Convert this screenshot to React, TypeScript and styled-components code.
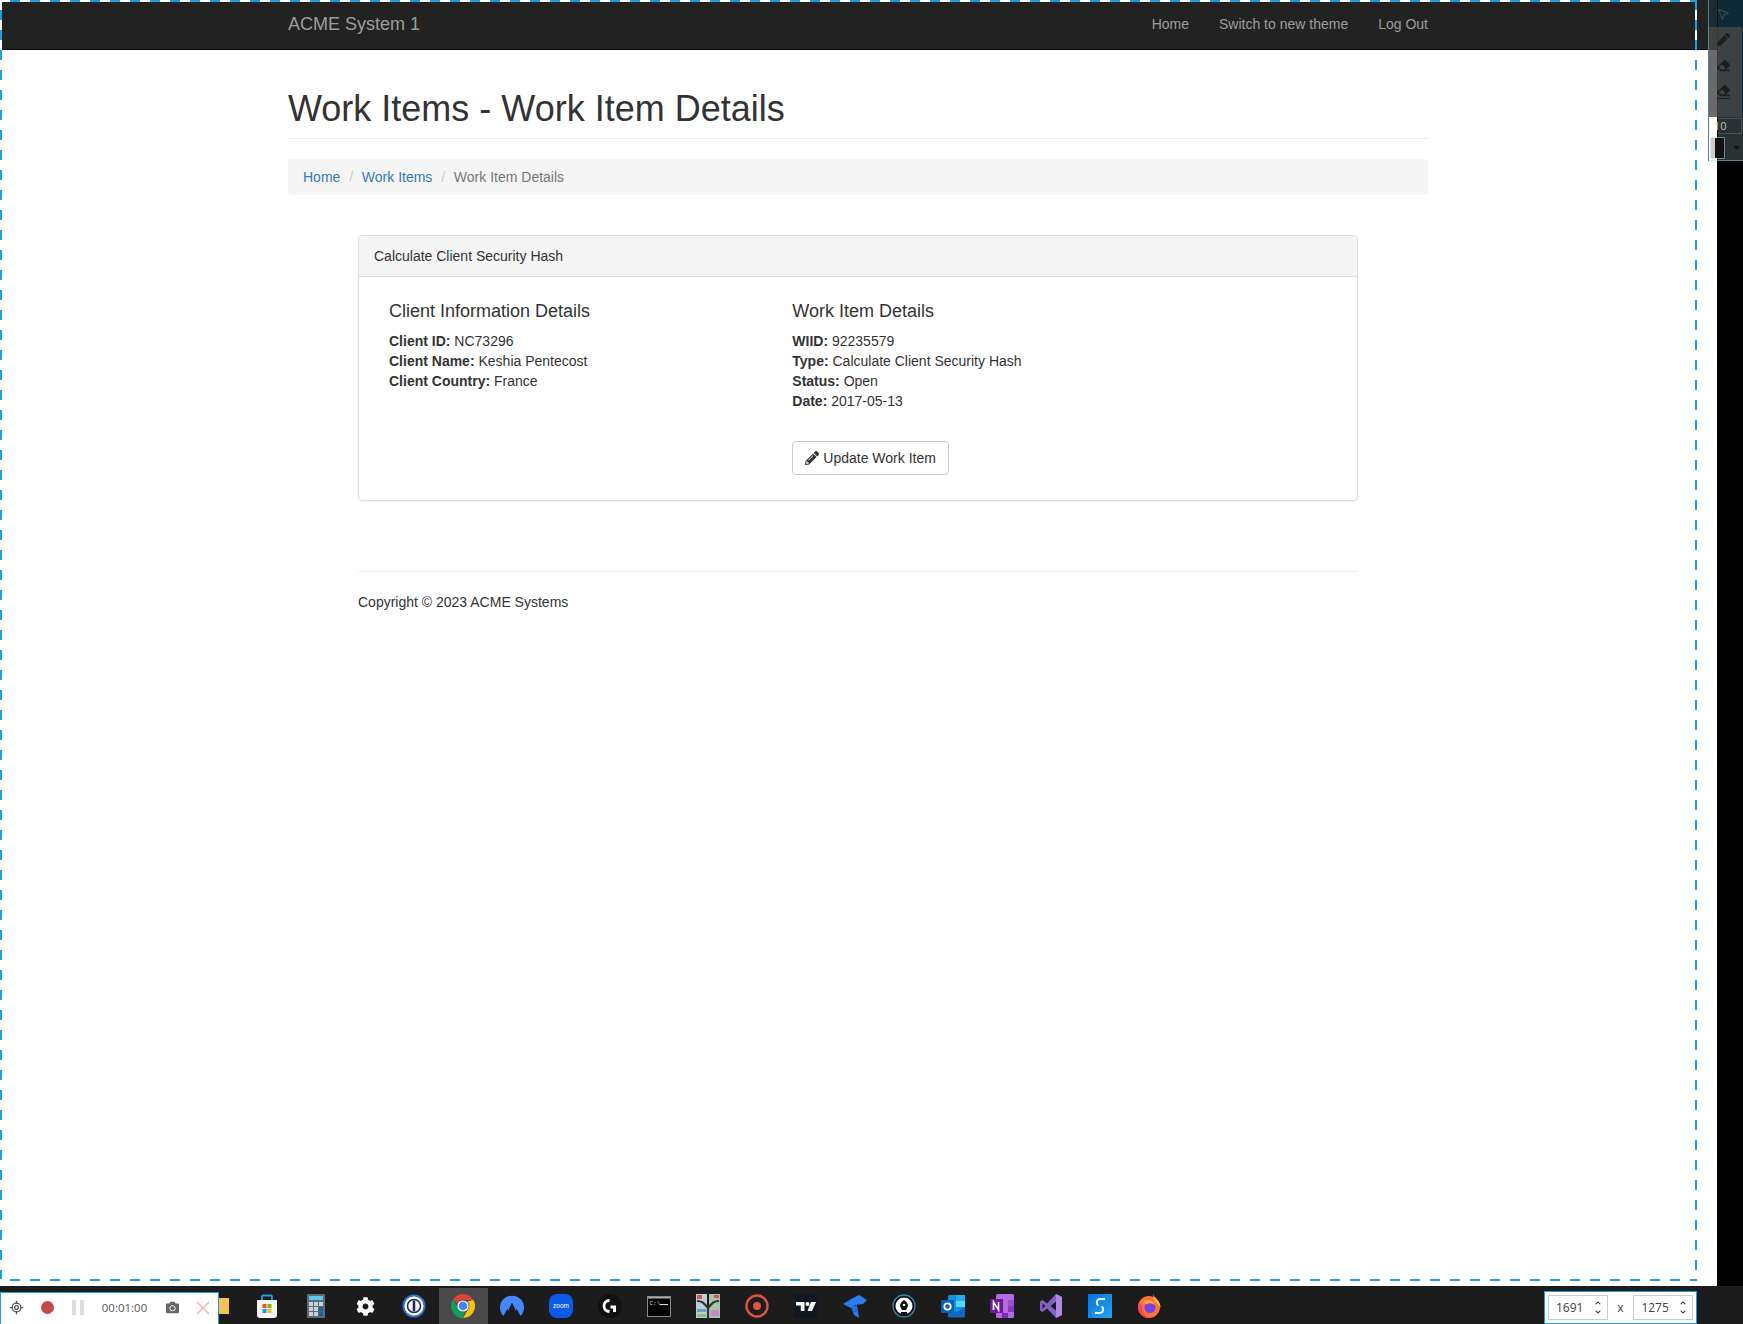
import React from 'react';
import styled, { createGlobalStyle } from 'styled-components';
import { FaPencilAlt, FaCog, FaPen, FaEraser, FaCamera, FaChevronUp, FaChevronDown, FaCaretDown } from 'react-icons/fa';
import { LuLocateFixed, LuMousePointer2 } from 'react-icons/lu';

const GlobalStyle = createGlobalStyle`
    html, body {
        margin: 0;
        padding: 0;
        background: #000;
    }
    body {
        font-family: "Liberation Sans", Arial, sans-serif;
        font-size: 14px;
        line-height: 20px;
        color: #333;
    }
    * {
        box-sizing: border-box;
    }
`;

const Screen = styled.div`
    position: relative;
    width: 1743px;
    height: 1324px;
    overflow: hidden;
    background: #000;
    display: flex;
    flex-direction: column;
`;

const Desk = styled.div`
    flex: 1;
    width: 1717px;
    background: #fff;
`;

const Navbar = styled.nav`
    height: 50px;
    background: #222;
    border-bottom: 1px solid #080808;
`;

const Container = styled.div`
    width: 1140px;
    margin-left: 288px;
`;

const NavInner = styled(Container)`
    height: 49px;
    padding-bottom: 2px;
    display: flex;
    align-items: center;
    justify-content: space-between;
`;

const Brand = styled.a`
    font-size: 18px;
    color: #9d9d9d;
`;

const NavLinks = styled.div`
    display: flex;
    gap: 30px;
`;

const NavLink = styled.a`
    color: #9d9d9d;
`;

const PageHeader = styled.div`
    margin-top: 39px;
    padding-bottom: 9px;
    border-bottom: 1px solid #eee;
    margin-bottom: 20px;
`;

const Title = styled.h1`
    margin: 0;
    font-size: 36px;
    font-weight: 500;
    line-height: 39.6px;
    color: #333;
`;

const Breadcrumb = styled.div`
    display: flex;
    height: 36px;
    align-items: center;
    padding: 0 15px;
    background: #f5f5f5;
    border-radius: 4px;
    margin-bottom: 40px;
`;

const Crumb = styled.a<{ $active?: boolean }>`
    color: ${p => (p.$active ? '#777' : '#337ab7')};
`;

const CrumbSep = styled.span`
    color: #ccc;
    padding: 0 8.8px;
`;

const Inner = styled.div`
    width: 1000px;
    margin-left: 70px;
`;

const Panel = styled.div`
    height: 266px;
    border: 1px solid #ddd;
    border-radius: 4px;
    box-shadow: 0 1px 1px rgba(0, 0, 0, 0.05);
`;

const PanelHeading = styled.div`
    height: 41px;
    padding: 10px 15px;
    background: #f5f5f5;
    border-bottom: 1px solid #ddd;
    border-radius: 3px 3px 0 0;
`;

const PanelBody = styled.div`
    display: grid;
    grid-template-columns: 403.3px 1fr;
    padding: 24px 30px 0;
`;

const SectionTitle = styled.h4`
    margin: 0 0 10px;
    font-size: 18px;
    font-weight: 500;
    line-height: 20px;
    color: #333;
`;

const Line = styled.div`
    height: 20px;
`;

const UpdateButton = styled.button`
    display: flex;
    align-items: center;
    gap: 4px;
    height: 34px;
    margin-top: 30px;
    padding: 0 12px;
    background: #fff;
    border: 1px solid #ccc;
    border-radius: 4px;
    color: #333;
    font: inherit;

    svg {
        width: 14px;
        height: 14px;
    }
`;

const Footer = styled.div`
    margin-top: 70px;
    padding-top: 20px;
    border-top: 1px solid #eee;
`;

const Taskbar = styled.div`
    height: 38px;
    flex: none;
    background: #1c1c1c;
    display: flex;
    padding-left: 193.5px;
    padding-top: 2px;
`;

const Slot = styled.div<{ $active?: boolean }>`
    width: 49.03px;
    height: 36px;
    display: flex;
    align-items: center;
    justify-content: center;
    background: ${p => (p.$active ? '#4a4a4a' : 'transparent')};

    svg {
        width: 24px;
        height: 24px;
        display: block;
    }
`;

const GearIcon = styled(FaCog)`
    && {
        width: 19px;
        height: 19px;
        color: #fff;
    }
`;

const DashEdge = styled.div<{ $side: 'top' | 'bottom' | 'left' | 'right' }>`
    position: absolute;
    ${p => p.$side === 'top' && 'left: 0; top: 0; width: 1697px; height: 2px;'}
    ${p => p.$side === 'bottom' && 'left: 0; top: 1279px; width: 1697px; height: 2px;'}
    ${p => p.$side === 'left' && 'left: 0; top: 0; width: 2px; height: 1281px;'}
    ${p => p.$side === 'right' && 'left: 1695px; top: 0; width: 2px; height: 1281px;'}
    background: repeating-linear-gradient(
        ${p => (p.$side === 'top' || p.$side === 'bottom' ? '90deg' : '180deg')},
        ${p => (p.$side === 'right' ? '#1ba1e2 0 10px, #fff 10px 20px' : '#fff 0 10px, #1ba1e2 10px 20px')}
    );
`;

const Recorder = styled.div`
    position: absolute;
    left: 0;
    top: 1292px;
    width: 219px;
    height: 32px;
    padding-bottom: 2px;
    background: #fff;
    border: 1px solid #1ba1e2;
    border-bottom: none;
    display: flex;
    align-items: center;
    color: #555;
    font-family: "Open Sans", sans-serif;
    font-size: 11.5px;
`;

const RecItem = styled.div<{ $w: number }>`
    width: ${p => p.$w}px;
    display: flex;
    justify-content: center;
    align-items: center;
    flex: none;
`;

const RecordDot = styled.span`
    width: 13px;
    height: 13px;
    border-radius: 50%;
    background: #c44a4a;
`;

const PauseBars = styled.span`
    width: 12px;
    height: 15px;
    border-left: 4px solid #ddd;
    border-right: 4px solid #ddd;
`;

const SizeBox = styled.div`
    position: absolute;
    left: 1544px;
    top: 1291px;
    width: 153px;
    height: 33px;
    background: #fff;
    border: 1px solid #1ba1e2;
    display: flex;
    align-items: center;
    padding: 0 3px;
    color: #444;
    font-family: "Open Sans", sans-serif;
    font-size: 12px;
`;

const SizeField = styled.div`
    width: 60px;
    height: 25px;
    border: 1px solid #ccc;
    display: flex;
    align-items: center;
    justify-content: space-between;
    padding: 0 5px 0 7px;
`;

const SizeX = styled.span`
    width: 26px;
    text-align: center;
`;

const Spinner = styled.span`
    display: flex;
    flex-direction: column;
    gap: 3px;
    color: #333;

    svg {
        width: 8px;
        height: 6px;
        display: block;
    }
`;

const SideTools = styled.div`
    position: absolute;
    left: 1708px;
    top: 0;
    width: 35px;
    height: 161px;
    display: flex;
    flex-direction: column;
    background: linear-gradient(90deg, transparent 9px, #0e2a38 9px);
    border-left: 1px solid rgba(170, 220, 240, 0.5);
    border-bottom: 1px solid rgba(170, 220, 240, 0.5);
`;

const SideTop = styled.div`
    height: 27px;
    padding-right: 6px;
    background: linear-gradient(90deg, rgba(0, 90, 130, 0.18) 9px, transparent 9px);
    display: flex;
    align-items: center;
    justify-content: center;
    color: #324a55;
`;

const SidePanel = styled.div`
    height: 90px;
    width: 33px;
    background: rgba(72, 72, 72, 0.81);
    display: flex;
    flex-direction: column;
    align-items: center;
    padding: 6px 5px 0 0;
    gap: 13px;
    color: #1d1d1d;

    svg {
        display: block;
        width: 13px;
        height: 13px;
    }
`;

const EraserLine = styled.div`
    border-bottom: 1px solid #1d1d1d;
    padding-bottom: 1px;
    margin-top: -1px;
`;

const SideLower = styled.div`
    flex: 1;
    display: flex;
    flex-direction: column;
    padding: 1px 1px 0 0;
    gap: 2px;
    background: linear-gradient(90deg, transparent 9px, rgba(50, 50, 50, 0.8) 9px);
    font-family: "Open Sans", sans-serif;
    font-size: 11px;
    color: #c4c4c4;
`;

const SideSpin = styled.div`
    height: 16px;
    display: flex;
    align-items: center;
    justify-content: space-between;
    padding: 0 4px 0 4px;
    border: 1px solid rgba(170, 220, 240, 0.2);
`;

const SideSwatch = styled.div`
    flex: 1;
    margin-bottom: 1px;
    display: flex;
    align-items: center;
    gap: 8px;
    color: #111;

    svg {
        width: 11px;
        height: 11px;
    }
`;

const SwatchColor = styled.span`
    width: 15px;
    height: 20px;
    margin-left: 2px;
    background: linear-gradient(90deg, #ccc 4px, #111 4px);
    outline: 1px solid rgba(170, 220, 240, 0.5);
`;

const ZoomWord = styled.text`
    font-family: "Liberation Sans", sans-serif;
    font-size: 6.5px;
    fill: #fff;
`;

const TermWord = styled.text`
    font-family: "Liberation Mono", monospace;
    font-size: 6px;
    fill: #ddd;
`;

const StoreIcon = () => (
    <svg viewBox="0 0 24 24">
        <path d="M7 7V2.500a1 1 0 0 1 1-1h8a1 1 0 0 1 1 1V7" fill="none" stroke="#20a4e0" strokeWidth="1.800" />
        <path d="M2 6h20v15a3 3 0 0 1-3 3H5a3 3 0 0 1-3-3z" fill="#f4f4f4" />
        <rect x="7.500" y="10" width="4" height="4" fill="#f25022" />
        <rect x="12.500" y="10" width="4" height="4" fill="#7fba00" />
        <rect x="7.500" y="15" width="4" height="4" fill="#00a4ef" />
        <rect x="12.500" y="15" width="4" height="4" fill="#ffb900" />
    </svg>
);

const CalcIcon = () => (
    <svg viewBox="0 0 24 24">
        <rect x="3" y="0" width="18" height="24" rx="1" fill="#5d6b74" />
        <rect x="5" y="2" width="14" height="4" fill="#5ccbe8" />
        {[8, 13, 18].map(y =>
            [5, 10, 15].map(x => (
                <rect key={`${x}-${y}`} x={x} y={y} width="4" height="4" fill={x === 15 && y > 8 ? '#1d5f9e' : '#c9d1d6'} />
            ))
        )}
    </svg>
);

const OnePasswordIcon = () => (
    <svg viewBox="0 0 24 24">
        <circle cx="12" cy="12" r="11.500" fill="#2f6fd8" />
        <circle cx="12" cy="12" r="9.500" fill="#fff" />
        <circle cx="12" cy="12" r="6.500" fill="#fff" stroke="#1a285f" strokeWidth="1.500" />
        <rect x="10.700" y="6.500" width="2.600" height="11" rx="1.200" fill="#1a285f" />
    </svg>
);

const ChromeIcon = () => (
    <svg viewBox="0 0 24 24">
        <path d="M12 0a12 12 0 0 1 10.400 6H12a6 6 0 0 0-5.600 3.800L2.300 4.900A12 12 0 0 1 12 0z" fill="#db4437" />
        <path d="M22.400 6A12 12 0 0 1 12 24l5.200-9a6 6 0 0 0-1-7.500z" fill="#f4c20d" />
        <path d="M12 24A12 12 0 0 1 2.300 4.900l4.900 9.300a6 6 0 0 0 6.600 3.500z" fill="#0f9d58" />
        <circle cx="12" cy="12" r="5.600" fill="#fff" />
        <circle cx="12" cy="12" r="4.400" fill="#4285f4" />
    </svg>
);

const NordIcon = () => (
    <svg viewBox="0 0 24 24">
        <path d="M3.400 22A12 12 0 1 1 20.600 22L16.600 14.500l-.6 2.400L12 8.500l-4 8.400-.6-2.400z" fill="#4687ff" />
    </svg>
);

const ZoomIcon = () => (
    <svg viewBox="0 0 24 24">
        <rect width="24" height="24" rx="8" fill="#0e5ae8" />
        <ZoomWord x="12" y="14" textAnchor="middle">zoom</ZoomWord>
    </svg>
);

const LogiIcon = () => (
    <svg viewBox="0 0 24 24">
        <circle cx="12" cy="12" r="12" fill="#111" />
        <path d="M11.500 6.500a5.500 5.500 0 0 0 0 11" fill="none" stroke="#fff" strokeWidth="2.800" />
        <path d="M12.500 11.500h5.500v6.500h-3v-3.500h-2.500z" fill="#fff" />
    </svg>
);

const TerminalIcon = () => (
    <svg viewBox="0 0 24 24">
        <rect x="0.500" y="2.500" width="23" height="20" fill="#000" stroke="#8a8a8a" />
        <rect x="1" y="3" width="22" height="1.500" fill="#aaa" />
        <TermWord x="2.500" y="10.500">C:\</TermWord>
        <rect x="13" y="10" width="8" height="1.100" fill="#ddd" />
    </svg>
);

const MosaicIcon = () => (
    <svg viewBox="0 0 24 24">
        <rect width="11" height="24" fill="#b9d0d8" />
        <rect x="13" width="11" height="24" fill="#a9c4ad" />
        <rect x="1" y="1" width="5" height="4" fill="#d05a5a" />
        <rect x="18" y="1" width="5" height="3" fill="#d05a5a" />
        <rect x="1" y="15" width="9" height="3" fill="#6a9fc0" />
        <rect x="15" y="16" width="8" height="6" fill="#c58ac9" />
        <rect x="1" y="20" width="9" height="3" fill="#8fc07a" />
        <path d="M1 7c5 0 7 2 11 7 4-5 6-7 11-7M12 14v10" fill="none" stroke="#333" strokeWidth="2.200" />
    </svg>
);

const RecordRingIcon = () => (
    <svg viewBox="0 0 24 24">
        <circle cx="12" cy="12" r="10.500" fill="none" stroke="#dd5444" strokeWidth="2.400" />
        <circle cx="12" cy="12" r="4" fill="#dd5444" />
    </svg>
);

const TradingViewIcon = () => (
    <svg viewBox="0 0 24 24">
        <rect width="24" height="24" fill="#131722" />
        <path d="M2 8h8.500v9H6.800v-5.500H2zM17 8h5l-4 9h-4.500z" fill="#fff" />
        <circle cx="13.500" cy="10" r="2" fill="#fff" />
    </svg>
);

const FoldsIcon = () => (
    <svg viewBox="0 0 24 24">
        <path d="M0 10l8-5 8-4 8 5-4 4-8 1-4 3z" fill="#2a7df0" />
        <path d="M8 13l6-2 1 6-5 1z" fill="#1f6fe0" />
        <path d="M10 18l5-1 1 7-5-3z" fill="#2a7df0" />
    </svg>
);

const BulbIcon = () => (
    <svg viewBox="0 0 24 24">
        <circle cx="12" cy="12" r="11" fill="#0b0b0b" stroke="#2b8aa5" strokeWidth="1.300" />
        <circle cx="12" cy="12" r="8.500" fill="#fff" />
        <path d="M12 6c3 2 4.500 4 3.500 7l-1.500 3h-4L8.500 13C7.500 10 9 8 12 6z" fill="#0b0b0b" />
        <circle cx="12" cy="11" r="1.300" fill="#fff" />
        <rect x="9" y="18" width="6" height="3" fill="#0b0b0b" />
    </svg>
);

const OutlookIcon = () => (
    <svg viewBox="0 0 24 24">
        <rect x="7" y="1" width="17" height="22" rx="1.500" fill="#1490df" />
        <rect x="15" y="1" width="9" height="6" fill="#28a8ea" />
        <rect x="15" y="7" width="9" height="6" fill="#50d9ff" />
        <path d="M7 13l8.500 5 8.500-5v9a1.500 1.500 0 0 1-1.500 1.500H8.500A1.500 1.500 0 0 1 7 22z" fill="#0f6cbd" />
        <rect y="6" width="13" height="13" rx="1" fill="#0a5fb4" />
        <circle cx="6.500" cy="12.500" r="3.200" fill="none" stroke="#fff" strokeWidth="1.800" />
    </svg>
);

const OneNoteIcon = () => (
    <svg viewBox="0 0 24 24">
        <rect x="6" y="0" width="18" height="24" rx="1.500" fill="#b36be0" />
        <rect x="18" y="6" width="6" height="6" fill="#9a4ed0" />
        <rect x="18" y="12" width="6" height="6" fill="#8a3bbd" />
        <rect x="12" y="19" width="6" height="5" fill="#7a2fb0" />
        <rect y="5" width="13" height="14" rx="1" fill="#6a1b9a" />
        <path d="M3.500 16V8l5 8V8" fill="none" stroke="#fff" strokeWidth="1.600" />
    </svg>
);

const VisualStudioIcon = () => (
    <svg viewBox="0 0 24 24">
        <path d="M17 0l6 3v18l-6 3-9-9.500-4.500 3.500L1 16.500v-9L3.500 6 8 9.500z" fill="#8661c5" />
        <path d="M3.500 9.500v5L6.500 12z" fill="#1c1c1c" />
        <path d="M17 0l6 3v18l-6 3z" fill="#ab8ce4" />
        <path d="M17 7.500v9L11.500 12z" fill="#1c1c1c" />
    </svg>
);

const SyncIcon = () => (
    <svg viewBox="0 0 24 24">
        <defs>
            <linearGradient id="syncFill" x1="0" y1="0" x2="1" y2="1">
                <stop offset="0" stopColor="#0a6fe0" />
                <stop offset="1" stopColor="#22a8ee" />
            </linearGradient>
        </defs>
        <rect width="24" height="24" fill="url(#syncFill)" />
        <path d="M15 5h-3a3.500 3.500 0 0 0-1.500 6.500M9 19h3a3.500 3.500 0 0 0 1.500-6.500" fill="none" stroke="#fff" strokeWidth="1.800" />
        <circle cx="16" cy="5" r="1.300" fill="#fff" />
        <circle cx="8" cy="19" r="1.300" fill="#fff" />
    </svg>
);

const FirefoxIcon = () => (
    <svg viewBox="0 0 24 24">
        <circle cx="12" cy="13" r="11" fill="#ff7139" />
        <path d="M16 0c1 4 8 7 7.500 14-1-3-3-4-5-6-1-3-2.500-5-2.500-8z" fill="#ffbd4f" />
        <path d="M1.500 9c-2 6 1 14 9.500 15-5-3-7-7-5.500-12z" fill="#ff3d5e" />
        <circle cx="13" cy="13.500" r="5.500" fill="#7542e5" />
        <path d="M6 8c4-3 11-2 13 4-3-3-7-3.500-9-1.500z" fill="#ffa436" />
    </svg>
);

const taskIcons: { name: string; node: React.ReactNode; active?: boolean }[] = [
    { name: 'explorer', node: <svg viewBox="0 0 24 24"><rect x="1" y="4" width="22" height="16" fill="#f3c34f" /><rect x="1" y="13" width="10" height="7" fill="#2a9fd8" /></svg> },
    { name: 'store', node: <StoreIcon /> },
    { name: 'calc', node: <CalcIcon /> },
    { name: 'settings', node: <GearIcon /> },
    { name: '1password', node: <OnePasswordIcon /> },
    { name: 'chrome', node: <ChromeIcon />, active: true },
    { name: 'nord', node: <NordIcon /> },
    { name: 'zoom', node: <ZoomIcon /> },
    { name: 'logi', node: <LogiIcon /> },
    { name: 'terminal', node: <TerminalIcon /> },
    { name: 'mosaic', node: <MosaicIcon /> },
    { name: 'record', node: <RecordRingIcon /> },
    { name: 'tradingview', node: <TradingViewIcon /> },
    { name: 'folds', node: <FoldsIcon /> },
    { name: 'bulb', node: <BulbIcon /> },
    { name: 'outlook', node: <OutlookIcon /> },
    { name: 'onenote', node: <OneNoteIcon /> },
    { name: 'vs', node: <VisualStudioIcon /> },
    { name: 'sync', node: <SyncIcon /> },
    { name: 'firefox', node: <FirefoxIcon /> },
];

function SizeInput(props: { value: string }) {
    return (
        <SizeField>
            {props.value}
            <Spinner>
                <FaChevronUp />
                <FaChevronDown />
            </Spinner>
        </SizeField>
    );
}

function App() {
    return (
        <Screen>
            <GlobalStyle />
            <Desk>
                <Navbar>
                    <NavInner>
                        <Brand>ACME System 1</Brand>
                        <NavLinks>
                            <NavLink>Home</NavLink>
                            <NavLink>Switch to new theme</NavLink>
                            <NavLink>Log Out</NavLink>
                        </NavLinks>
                    </NavInner>
                </Navbar>
                <Container>
                    <PageHeader>
                        <Title>Work Items - Work Item Details</Title>
                    </PageHeader>
                    <Breadcrumb>
                        <Crumb>Home</Crumb>
                        <CrumbSep>/</CrumbSep>
                        <Crumb>Work Items</Crumb>
                        <CrumbSep>/</CrumbSep>
                        <Crumb $active>Work Item Details</Crumb>
                    </Breadcrumb>
                    <Inner>
                        <Panel>
                            <PanelHeading>Calculate Client Security Hash</PanelHeading>
                            <PanelBody>
                                <div>
                                    <SectionTitle>Client Information Details</SectionTitle>
                                    <Line><strong>Client ID:</strong> NC73296</Line>
                                    <Line><strong>Client Name:</strong> Keshia Pentecost</Line>
                                    <Line><strong>Client Country:</strong> France</Line>
                                </div>
                                <div>
                                    <SectionTitle>Work Item Details</SectionTitle>
                                    <Line><strong>WIID:</strong> 92235579</Line>
                                    <Line><strong>Type:</strong> Calculate Client Security Hash</Line>
                                    <Line><strong>Status:</strong> Open</Line>
                                    <Line><strong>Date:</strong> 2017-05-13</Line>
                                    <UpdateButton><FaPencilAlt />Update Work Item</UpdateButton>
                                </div>
                            </PanelBody>
                        </Panel>
                        <Footer>Copyright © 2023 ACME Systems</Footer>
                    </Inner>
                </Container>
            </Desk>
            <Taskbar>
                {taskIcons.map(icon => (
                    <Slot key={icon.name} $active={icon.active}>{icon.node}</Slot>
                ))}
            </Taskbar>

            <DashEdge $side="top" />
            <DashEdge $side="left" />
            <DashEdge $side="right" />
            <DashEdge $side="bottom" />

            <Recorder>
                <RecItem $w={31}><LuLocateFixed size={15} /></RecItem>
                <RecItem $w={31}><RecordDot /></RecItem>
                <RecItem $w={30}><PauseBars /></RecItem>
                <RecItem $w={63}>00:01:00</RecItem>
                <RecItem $w={32}><FaCamera size={13} color="#666" /></RecItem>
                <RecItem $w={30}>
                    <svg width="14" height="14" viewBox="0 0 14 14">
                        <path d="M1 1l12 12M13 1L1 13" stroke="#f5b5b5" strokeWidth="1.500" />
                    </svg>
                </RecItem>
            </Recorder>

            <SizeBox>
                <SizeInput value="1691" />
                <SizeX>x</SizeX>
                <SizeInput value="1275" />
            </SizeBox>

            <SideTools>
                <SideTop><LuMousePointer2 size={14} /></SideTop>
                <SidePanel>
                    <FaPen />
                    <FaEraser />
                    <EraserLine><FaEraser /></EraserLine>
                </SidePanel>
                <SideLower>
                    <SideSpin>10<Spinner><FaChevronUp /><FaChevronDown /></Spinner></SideSpin>
                    <SideSwatch><SwatchColor /><FaCaretDown /></SideSwatch>
                </SideLower>
            </SideTools>
        </Screen>
    );
}

export default App;
